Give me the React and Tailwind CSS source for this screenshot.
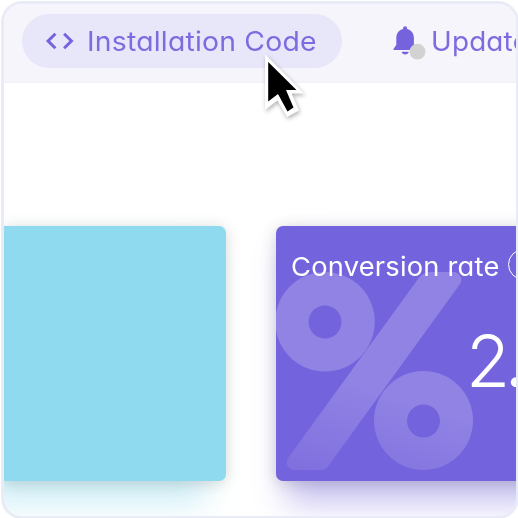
function CodeIcon() {
  return (
    <svg className="block h-[18px] w-[30px] shrink-0" viewBox="0 0 30 18" fill="none" stroke="#7563de" strokeWidth="3">
      <path d="M10.4 1.8 3.1 9l7.3 7.2M19.1 1.8 26.4 9l-7.3 7.2" />
    </svg>
  );
}

function BellIcon() {
  return (
    <svg className="mt-[2px] block h-[34px] w-[34px] shrink-0 overflow-visible" viewBox="0 0 34 34">
      <path fill="#7563de" d="M10.1 3.2a2 2 0 0 1 4 0v.8c4.5 1 6.8 4.8 6.8 9.2v6.5l2.8 4.3v1H.5v-1l2.8-4.3v-6.5C3.300 8.800 5.600 5 10.100 4zM8.700 26.700h7c-.3 1.800-1.700 2.700-3.500 2.700s-3.200-.9-3.500-2.700z" />
      <circle cx="24.500" cy="26.700" r="7.900" fill="#d2d2d2" />
    </svg>
  );
}

function PercentMark() {
  return (
    <svg className="absolute top-[46px] left-0 h-[199px] w-[199px]" viewBox="0 0 199 199">
      <defs>
        <linearGradient id="mark" gradientUnits="userSpaceOnUse" x1="110" y1="120" x2="80" y2="215">
          <stop offset="0" stopColor="#9083e4" />
          <stop offset="1" stopColor="#8070df" />
        </linearGradient>
      </defs>
      <g fill="url(#mark)" fillRule="evenodd">
        <path d="M49 0a49.500 49.500 0 1 0 0 99.500a49.500 49.500 0 1 0 0-99.500zM49 33.500a16.500 16.500 0 1 1 0 33a16.500 16.500 0 1 1 0-33z" />
        <path d="M147.500 99a49.500 49.500 0 1 0 0 99a49.500 49.500 0 1 0 0-99zM147.500 132.500a16.500 16.500 0 1 1 0 33a16.500 16.500 0 1 1 0-33z" />
        <path d="M156 0h21c7 0 10.500 7 7 12L53 193c-2.500 3.500-4.500 5-8 5H19c-7 0-10.500-7-7-12L143.500 5C146.500 1.500 150 0 156 0z" />
      </g>
    </svg>
  );
}

function Cursor() {
  return (
    <svg className="absolute top-[52px] left-[262px] h-[70px] w-[46px] drop-shadow-[1px_2px_2px_rgba(0,0,0,0.3)]" viewBox="0 0 46 70">
      <path fill="#fff" d="M3 2 42 41.500H29.500L37 58.500 25 65 15.500 48.500 3 58z" />
      <path fill="#000" d="M6.200 10 34.500 38H24L31.500 55.500 25.500 59.500 16 42 6.200 49.500z" />
    </svg>
  );
}

export default function App() {
  return (
    <div className="relative h-[518px] w-[518px] overflow-hidden bg-white pt-px pl-px font-['Inter',sans-serif] [font-feature-settings:'cv11']">
      <div className="h-[518px] w-[518px] overflow-hidden rounded-[21px] border-[3px] border-[#e9ecf7] bg-white">
        <header className="flex h-[79px] items-start border-b border-[#f2f2f6] bg-[#f6f5fc] pt-[10px] pl-[18px] text-[27px] whitespace-nowrap text-[#7d6ce0]">
          <div className="flex h-[54px] w-[320px] shrink-0 items-center rounded-full bg-[#e8e6f9] pl-[23px]">
            <CodeIcon />
            <span className="mt-[2px] ml-[12px] origin-left scale-x-[1.05] tracking-[0.2px]">Installation Code</span>
          </div>
          <div className="ml-[51px] flex h-[54px] shrink-0 items-center">
            <BellIcon />
            <span className="mt-[2px] ml-[4px] origin-left scale-x-[1.03] tracking-[0.2px]">Updates</span>
          </div>
        </header>
        <main className="flex h-[433px] gap-[50px] pt-[143px]">
          <section className="h-[255px] w-[222px] shrink-0 rounded-r-[7px] bg-[#8fdaee] shadow-[0_2px_16px_rgba(0,0,0,0.16),-20px_24px_30px_rgba(143,218,238,0.4)]" />
          <section className="relative h-[255px] w-[360px] shrink-0 rounded-[7px] bg-[#7363dc] text-white shadow-[0_2px_16px_rgba(0,0,0,0.16),10px_22px_32px_rgba(115,99,220,0.4)]">
            <PercentMark />
            <div className="relative flex h-[80px] items-center pl-[15px] text-[26px] whitespace-nowrap">
              <span className="w-[210px] origin-left scale-x-[1.05] tracking-[0.2px]">Conversion rate</span>
              <span className="mb-[3px] ml-[7px] flex h-[31px] w-[31px] items-center justify-center rounded-full border-[1.5px] border-white text-[20px]">i</span>
            </div>
            <div className="relative mt-[9px] pl-[190px] text-[72px] leading-[92px] font-light tracking-[-3px]">
              2<span className="-ml-[2px] font-normal">.4%</span>
            </div>
          </section>
        </main>
      </div>
      <Cursor />
    </div>
  );
}
